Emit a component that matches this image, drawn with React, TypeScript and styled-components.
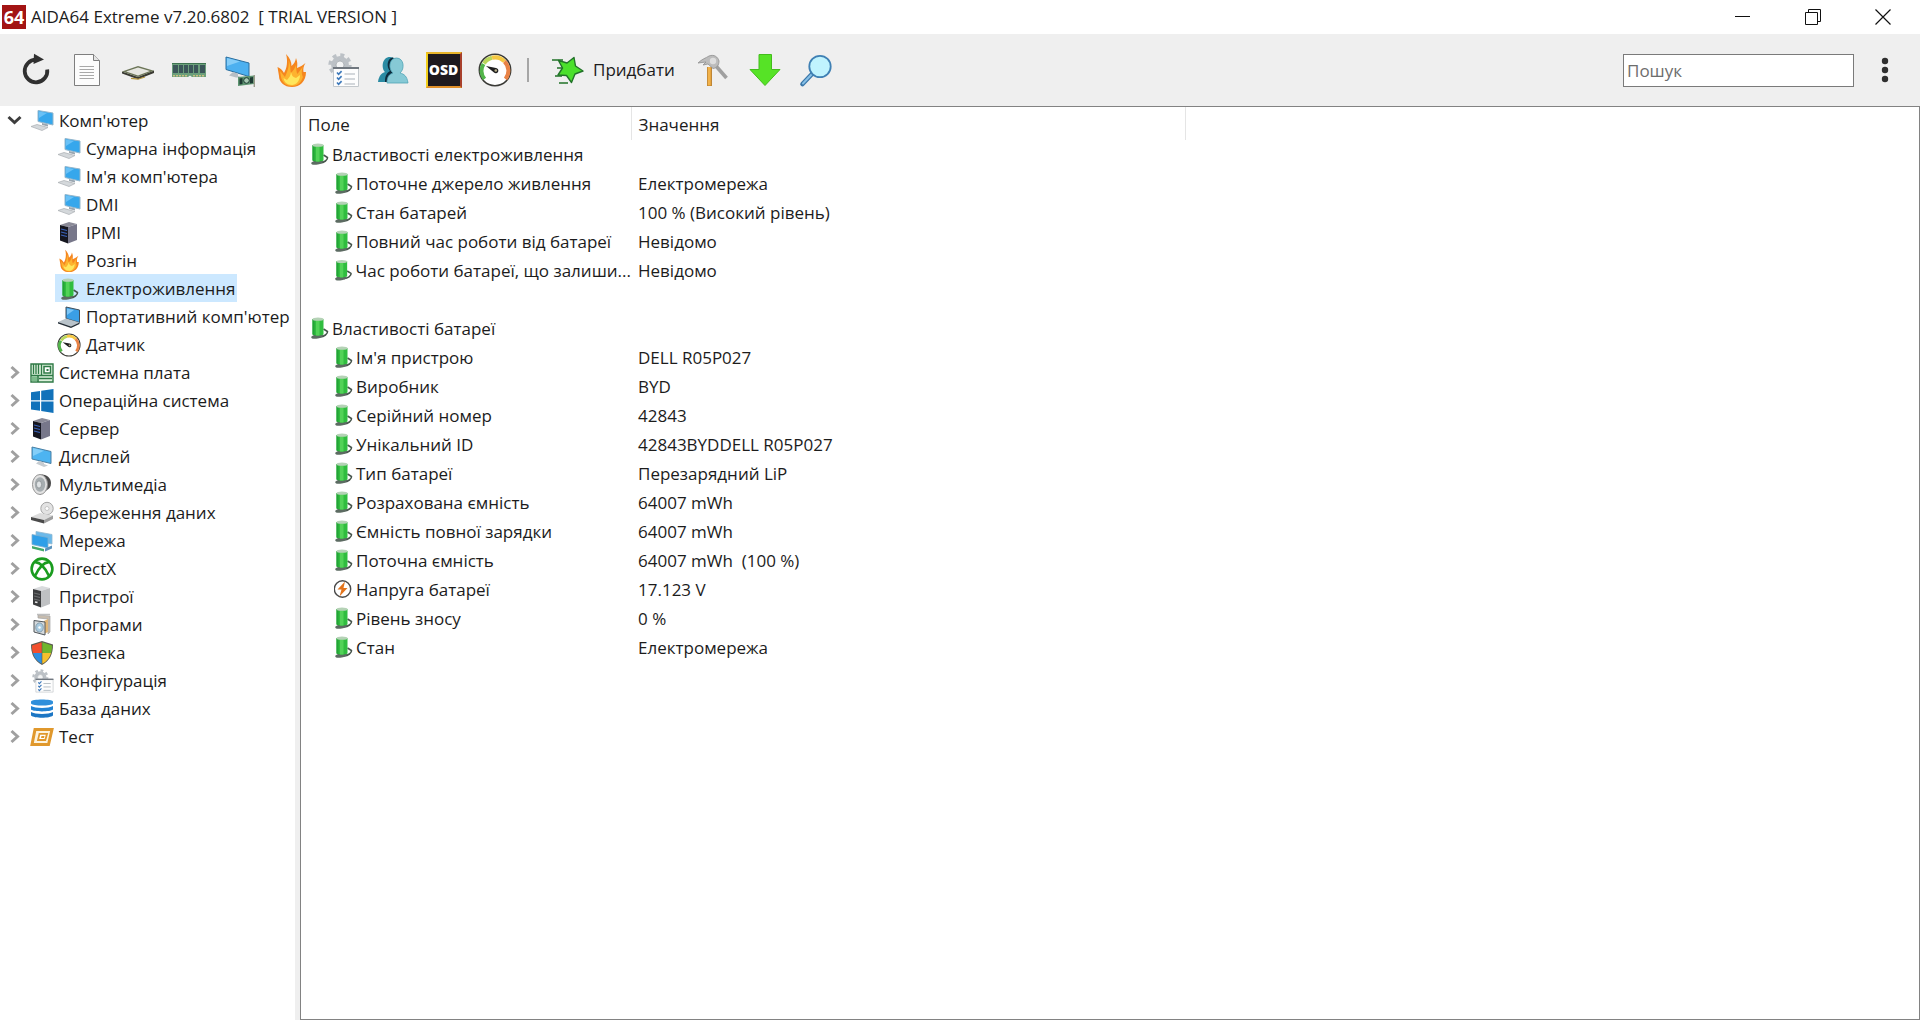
import React, { useState } from "react";
import styled, { createGlobalStyle } from "styled-components";

const GlobalStyle = createGlobalStyle`
  *, *::before, *::after { box-sizing: border-box; }
  body { margin: 0; background: #fff; }
  body, button, input, table {
    font-family: "Open Sans", "Noto Sans", sans-serif;
    font-size: 17px;
    line-height: 24px;
    color: #1c1c1c;
  }
  button { border: 0; padding: 0; background: none; cursor: default; }
`;

const Window = styled.div`
  display: flex;
  flex-direction: column;
  min-height: 100vh;
`;

const TitleBar = styled.header`
  display: flex;
  align-items: center;
  height: 34px;
  padding: 0 2px;
  gap: 5px;
`;

const Title = styled.h1`
  flex: 1;
  margin: 0;
  font-size: 17px;
  font-weight: 400;
  line-height: 24px;
  white-space: pre;
`;

const CaptionButton = styled.button`
  display: grid;
  place-items: center;
  width: 70px;
  height: 34px;
  &:hover { background: #e5e5e5; }
`;

const CaptionGroup = styled.div`
  display: flex;
`;

const Toolbar = styled.div`
  display: flex;
  align-items: center;
  height: 72px;
  padding: 0 10px;
  background: #efefef;
`;

const ToolButton = styled.button<{ $wide?: boolean }>`
  display: flex;
  align-items: center;
  justify-content: ${(p) => (p.$wide ? "flex-start" : "center")};
  gap: 9px;
  width: ${(p) => (p.$wide ? "auto" : "51px")};
  height: 48px;
  padding: ${(p) => (p.$wide ? "0 14px" : "0")};
  &:hover { background: #e2e6ea; }
`;

const Divider = styled.span`
  width: 2px;
  height: 24px;
  margin: 0 7px;
  background: #a6a6a6;
`;

const Spacer = styled.div`
  flex: 1;
`;

const SearchBox = styled.input`
  width: 231px;
  height: 33px;
  margin-right: 5px;
  padding: 0 3px;
  border: 1px solid #7a7a7a;
  border-radius: 0;
  background: #fff;
  outline: none;
  &::placeholder { color: #6d6d6d; opacity: 1; }
`;

const Workspace = styled.div`
  display: flex;
  flex: 1;
`;

const Sidebar = styled.nav`
  width: 295px;
  flex: none;
`;

const Splitter = styled.div`
  width: 5px;
  flex: none;
  background: #efefef;
`;

const Tree = styled.ul`
  list-style: none;
  margin: 0;
  padding: 0;
`;

const TreeRow = styled.div<{ $level: number }>`
  display: flex;
  align-items: center;
  height: 28px;
  padding-left: ${(p) => (p.$level ? "55px" : "0")};
`;

const Expander = styled.button`
  display: grid;
  place-items: center;
  width: 28px;
  height: 28px;
`;

const TreeLabel = styled.button<{ $selected: boolean }>`
  display: flex;
  align-items: center;
  gap: 5px;
  height: 28px;
  padding: 2px 2px 0;
  white-space: nowrap;
  background: ${(p) => (p.$selected ? "#cce8ff" : "transparent")};
`;

const Details = styled.main`
  flex: 1;
  min-width: 0;
  border: 1px solid #828282;
`;

const Table = styled.table`
  width: 100%;
  table-layout: fixed;
  border-collapse: collapse;
`;

const FieldCol = styled.col`
  width: 330px;
`;

const ValueCol = styled.col`
  width: 554px;
`;

const HeadCell = styled.th`
  height: 33px;
  padding: 2px 7px 0;
  font-weight: 400;
  text-align: left;
  border-right: 1px solid #e5e5e5;
  &:last-child { border-right: 0; }
`;

const Cell = styled.td`
  height: 29px;
  padding: 0 7px;
  white-space: pre;
`;

const FieldCell = styled.td<{ $level: number }>`
  height: 29px;
  padding: 0 0 0 ${(p) => (p.$level ? "33px" : "9px")};
`;

const FieldLine = styled.span`
  display: flex;
  align-items: center;
  gap: 3px;
  white-space: nowrap;
`;

/* ---------- caption and toolbar drawings ---------- */

const LogoBox = styled.span`
  display: grid;
  place-items: center;
  width: 24px;
  height: 24px;
  background: #a31414;
  color: #fff;
  font-size: 18px;
  font-weight: 700;
  line-height: 24px;
`;

const Big = ({ children }: { children: React.ReactNode }) => (
  <svg width="34" height="34" viewBox="0 0 34 34" aria-hidden="true" overflow="visible">{children}</svg>
);

const Small = ({ children }: { children: React.ReactNode }) => (
  <svg width="24" height="24" viewBox="0 0 24 24" aria-hidden="true">{children}</svg>
);

const RefreshIcon = () => (
  <Big>
    <path d="M28.2 16.5A11.3 11.3 0 1 1 17 6.7" fill="none" stroke="#303030" strokeWidth="3.8" />
    <path d="M15 .8L25 6.6L14.5 11z" fill="#303030" />
  </Big>
);

const ReportIcon = () => (
  <Big>
    <path d="M4.5 1.5H23.5L29.5 7.5V32.5H4.5z" fill="#fcfcfc" stroke="#7e7e7e" />
    <path d="M23.5 1.5V7.5H29.5" fill="#e4e4e4" stroke="#7e7e7e" />
    <path d="M9.5 13.5H24M9.5 16.5H24M9.5 19.5H24M9.5 22.5H24M9.5 25.5H24" stroke="#a8a8a8" />
  </Big>
);

const ChipIcon = () => (
  <Big>
    <path d="M1 18.5L17 24L33 17.5V20L17 26.2L1 20.5z" fill="#3a3a33" />
    <path d="M1 18.5L17 13L33 17.8L17 24z" fill="#6c7558" />
    <path d="M5 18.5L17 14.4L29 18L17 22.6z" fill="#e6e6e0" />
    <path d="M10 25.3L17 26.2L24 24" fill="none" stroke="#b4953c" strokeWidth="1.2" />
  </Big>
);

const MemoryIcon = () => (
  <Big>
    <path d="M0 10H34V24H20L18 22.5L16 24H0z" fill="#6b9f7b" />
    <path d="M1 12h5v8h-5zM7 12h4v8H7zM12 12h4v8h-4zM17 12h4v8h-4zM22 12h4v8h-4zM28 12h5v8h-5z" fill="#3b5659" />
    <path d="M1 22.7H15M21 22.7H33" stroke="#c9bf80" strokeWidth="1.4" strokeDasharray="2 1" />
    <path d="M0 10.5H34" stroke="#3d7350" />
  </Big>
);

const DisplayCardIcon = () => (
  <Big>
    <path d="M3 4L26 10V23.5L3 16.5z" fill="#4cb0f0" stroke="#2b6f9f" />
    <path d="M4 5L17 8.4L4 13z" fill="#85cdf8" />
    <path d="M10 19L15 20.500V23L19 24.500H13L6 22.500z" fill="#b7bec4" />
    <path d="M15 24L31 22.500V31L15 33z" fill="#5d9470" />
    <path d="M16.500 25.500l3-.5v6l-3 .5zM27 24.500l3-.5v6l-3 .5z" fill="#1d3a33" />
    <circle cx="23.500" cy="27.500" r="2.800" fill="#a8cbb4" stroke="#1d3a33" />
    <path d="M31.300 22V34" stroke="#9a9a8a" strokeWidth="1.400" />
  </Big>
);

const FlameShapes = () => (
  <>
    <path
      d="M12 1C16 5 17.500 9 17.500 13C20 11 21.500 8 22 5C23.500 9 23.500 11 23 15C26 14 29 12 31.500 10C29.500 13 29 16 29.500 19L32 19C32 28 26 34 18 34C10 34 5 29 5 23L3.500 14C6 15 8.500 17 10 20C13 15 14 8 12 1z"
      fill="#f5861f"
    />
    <path
      d="M14.500 7C17 12 16 17 17 20C19 18 21 15 22 12C22.500 16 22 19 23.500 21C25 19 27 16 29 13.500C27 18 28 22 29 24C27 30 23 33 18 33C12 33 8 29 7 24L6 18C8 20 9 22 11 24C13 19 15.500 14 14.500 7z"
      fill="#fdb32f"
    />
    <path d="M17 19C18 23 19 24 22 25L26 22C26 28 22 32 18 32C13 32 10 29 9.500 25L13 27C15 25 17 22 17 19z" fill="#ffe65c" />
  </>
);

const FlameIcon = () => <Big><FlameShapes /></Big>;

const GearShape = () => (
  <>
    <circle cx="15" cy="12" r="6.4" fill="none" stroke="#bcc1c6" strokeWidth="5" />
    <circle cx="15" cy="12" r="10" fill="none" stroke="#bcc1c6" strokeWidth="3.4" strokeDasharray="4 3.85" />
    <circle cx="15" cy="12" r="4" fill="#f3f4f5" stroke="#9ca2a8" strokeWidth=".7" />
  </>
);

const ConfigShapes = () => (
  <>
    <GearShape />
    <path d="M8.5 14.5H33.5V33.5H8.5z" fill="#fdfdfd" stroke="#c3c8cc" />
    <path d="M8 15H34" stroke="#70777f" strokeWidth="2" />
    <path d="M12 19.5l1.6 1.8 3-3.2M12 24.5l1.6 1.8 3-3.2M12 29.5l1.6 1.8 3-3.2" fill="none" stroke="#3c78ba" strokeWidth="1.6" />
    <path d="M19.5 21H30M19.5 26H30M19.5 31H30" stroke="#a9b2ba" strokeWidth="1.2" />
  </>
);

const ConfigIcon = () => <Big><ConfigShapes /></Big>;

const UsersIcon = () => (
  <Big>
    <path d="M2 29C3 22 6 20 9 19C5 15 6 4 14 4C18 4 20 7 20 10L16 29z" fill="#2b8ba3" />
    <path d="M9 29C9 22 11 20 14 18C10 14 11 5 17 4.5L20 8V29z" fill="#0d2b3c" />
    <path d="M11 30C11 23 14 21 17 20C12 16 13 5 20.500 5C28 5 29 16 24 20C28 21 31 23 32 30z" fill="#86c9d5" stroke="#4fa3b5" strokeWidth=".8" />
  </Big>
);

const OsdBox = styled.span`
  display: grid;
  place-items: center;
  width: 36px;
  height: 36px;
  border: 2px solid;
  border-color: #e8b52a #a8402c #e0902a #f2cf1c;
  background: #1e1a1e;
  color: #fff;
  font-size: 14px;
  font-weight: 800;
  line-height: 16px;
`;

const GaugeShapes = () => (
  <>
    <circle cx="17" cy="17" r="15.700" fill="#fff" stroke="#3a3a36" strokeWidth="1.500" />
    <path d="M6.500 26A13 13 0 0 1 5.500 11" fill="none" stroke="#52b54a" strokeWidth="4" />
    <path d="M6 10.500A13 13 0 0 1 14 4.800" fill="none" stroke="#b9d65a" strokeWidth="4" />
    <path d="M14 4.800A13 13 0 0 1 26.500 8.500" fill="none" stroke="#f5c842" strokeWidth="4" />
    <path d="M26.500 8.500A13 13 0 0 1 27.500 26" fill="none" stroke="#e98346" strokeWidth="4" />
    <path d="M8 13L18 15A2.600 2.600 0 1 1 16 19.500z" fill="#1f1f1f" />
    <circle cx="17.800" cy="17.500" r="1.300" fill="#b9b08a" />
  </>
);

const GaugeIcon = () => <Big><GaugeShapes /></Big>;

const BuyIcon = () => (
  <Big>
    <path d="M2 7H13M7 15H14M5 23H12M9 30H18" stroke="#227329" strokeWidth="1.500" />
    <path d="M24 4.500L25.500 13L33 18L25 21L21.500 29.500L16.500 22.500L8 22L12.500 15L8.500 7.500L17 10z" fill="#4be02c" stroke="#227329" strokeWidth="1.400" strokeLinejoin="round" />
  </Big>
);

const HatchetIcon = () => (
  <Big>
    <path d="M19 13L29.500 25" stroke="#9f9f9f" strokeWidth="3.600" />
    <path d="M12.500 14V33" stroke="#b87a22" strokeWidth="4.800" />
    <path d="M12.300 14V32.500" stroke="#f2b24a" strokeWidth="3" />
    <path d="M1 10C5 6 9 5 12 3C17 1 21 4 22 8C22 12 20 15 16 15.500L11 11L6 12L9 9z" fill="#bcbcbc" stroke="#8f8f8f" strokeWidth=".8" />
    <circle cx="16" cy="8" r="3.200" fill="#dedede" />
  </Big>
);

const DownloadIcon = () => (
  <Big>
    <path d="M11 1.500H23.500V16.500H32L17 32.500L2 16.500H11z" fill="#56e326" stroke="#43bd1c" />
  </Big>
);

const MagnifierIcon = () => (
  <Big>
    <path d="M13 21L3.500 31" stroke="#3a76a8" strokeWidth="4.600" strokeLinecap="round" />
    <path d="M12.500 21.500L4 30.500" stroke="#86bfe6" strokeWidth="2" strokeLinecap="round" />
    <circle cx="21" cy="13.500" r="10.700" fill="#c0f3fe" stroke="#3f80b4" strokeWidth="1.800" />
  </Big>
);

/* ---------- tree drawings ---------- */

const ComputerIcon = () => (
  <Small>
    <path d="M8 1.500L23 4V16L8 12.500z" fill="#36a7ec" stroke="#93b6cc" />
    <path d="M9 2.500L17 4L9 9z" fill="#69c1f6" />
    <path d="M12 14L18 15.500V17.500L12 16z" fill="#9aa6b0" />
    <path d="M1 17.500L7 15.500L18 18.500L12 21.500z" fill="#d4d8db" stroke="#a9aeb2" strokeWidth=".7" />
  </Small>
);

const TowerIcon = ({ light }: { light?: boolean }) => (
  <Small>
    <path d="M3 4L12 1L20 3L11 6z" fill={light ? "#d9dbdd" : "#8a8a97"} />
    <path d="M11 6L20 3V19L11 22.500z" fill={light ? "#bfc1c3" : "#77778a"} />
    <path d="M3 4L11 6V22.500L3 19.500z" fill={light ? "#3c3d3f" : "#15161f"} />
    <path d="M4 8L10 9.500M4 11L10 12.500M4 14L10 15.500" stroke={light ? "#6c6e70" : "#3a62b8"} strokeWidth="1.200" />
    {light && <path d="M5 17L7.500 17.600" stroke="#e8e8e8" strokeWidth="1.500" />}
  </Small>
);

const SmallFlameIcon = () => (
  <Small><g transform="scale(.68)"><FlameShapes /></g></Small>
);

const BatteryShapes = () => (
  <>
    <path d="M9 20C13 19.500 17 17 16.500 14.500L12.500 12" fill="none" stroke="#46544b" strokeWidth="1.600" />
    <path d="M0 20C2 17 8 17 12.500 18C12 21 5 22.500 1 21.500z" fill="#5c6b62" />
    <path d="M1.500 2V17.500C4 19 10 19 12.500 17.500V2z" fill="#30bd3f" />
    <path d="M1.500 2V17.500L3.500 18.300V2z" fill="#23a337" />
    <path d="M5 2.500H8.500V18.500H5z" fill="#52d257" />
    <ellipse cx="7" cy="2.200" rx="5.500" ry="1.600" fill="#b5d2b6" />
  </>
);

const SmallBatteryIcon = () => (
  <Small><g transform="translate(4 1)"><BatteryShapes /></g></Small>
);

const LaptopIcon = () => (
  <Small>
    <path d="M9 2L22.500 5V17.500L9 13.500z" fill="#3a9fe6" stroke="#42505c" />
    <path d="M10 3.500L17 5L10 10z" fill="#7cc6f6" />
    <path d="M1 17L9 13.500L22.500 17.500L14 21.500z" fill="#b9c3ca" />
    <path d="M1 17L14 21.500L22.500 17.500V19L14 23L1 18.500z" fill="#27313a" />
  </Small>
);

const SmallGaugeIcon = () => (
  <Small><g transform="scale(.705)"><GaugeShapes /></g></Small>
);

const BoardIcon = () => (
  <Small>
    <path d="M1 3H23V21H1z" fill="#dcf0dc" stroke="#2f7a46" strokeWidth="1.400" />
    <path d="M3.500 3V13M6 3V13M8.500 3V13M11.500 3V14" stroke="#2f7a46" strokeWidth="1.300" />
    <path d="M14 5.500H20.500V12H14z" fill="#fff" stroke="#2f7a46" strokeWidth="1.500" />
    <path d="M16.500 8h2v2h-2z" fill="#2f7a46" />
    <path d="M1 14.500H23M8 14V21M9 17.500H22" stroke="#2f7a46" strokeWidth="1.600" />
    <path d="M1.800 15.500H7V20.200H1.800z" fill="#7dbb8b" />
  </Small>
);

const WindowsIcon = () => (
  <Small>
    <path d="M1 3.300L10 2V11.300H1zM11.200 1.800L23.500 0V11.300H11.200zM1 12.500H10V21.800L1 20.500zM11.200 12.500H23.500V24L11.200 22z" fill="#1272ba" />
  </Small>
);

const DisplayIcon = () => (
  <Small>
    <path d="M2 2L21 6.500V18.500L2 14z" fill="#4db4f1" stroke="#4a7fa3" />
    <path d="M3 3L14 5.700L3 11z" fill="#83cef8" />
    <path d="M9 16L14 17.500V19L18 20.500L14 22L6 18.500z" fill="#c6ccd1" />
  </Small>
);

const SpeakerIcon = () => (
  <Small>
    <path d="M9 2C15 0 21 4 21 10C21 14 19 16 17 17L10 22z" fill="#4b4b4b" />
    <ellipse cx="10" cy="11.500" rx="7.500" ry="10" fill="#e2e2e2" stroke="#939393" />
    <ellipse cx="10" cy="11.500" rx="5.200" ry="7.300" fill="#a6adb0" />
    <ellipse cx="9" cy="11.500" rx="2.600" ry="3.600" fill="#dfe3e5" stroke="#858b8e" strokeWidth=".7" />
  </Small>
);

const DiskIcon = () => (
  <Small>
    <circle cx="17" cy="7.500" r="6.200" fill="#e3e3e3" stroke="#a5a5a5" />
    <circle cx="17" cy="7.500" r="2" fill="#fff" stroke="#b5b5b5" strokeWidth=".7" />
    <path d="M1 16L10 12L23 14.500L14 19z" fill="#dcdcdc" />
    <path d="M1 16L14 19V22.500L1 19z" fill="#4a4a4a" />
    <path d="M14 19L23 14.500V18L14 22.500z" fill="#9e9e9e" />
  </Small>
);

const NetworkIcon = () => (
  <Small>
    <path d="M6 2.500L22 5.500V15L6 12z" fill="#6bb9ea" stroke="#8fb7d0" strokeWidth=".8" />
    <path d="M2 5.500L18 8.500V19L2 15.500z" fill="#2f9fe8" stroke="#7fb0cf" strokeWidth=".8" />
    <path d="M2 17L14 20V22.500L2 19.500z" fill="#43a96b" />
    <path d="M15 19.500L22 16.500V19.500L15 22.500z" fill="#5b93bd" />
  </Small>
);

const XboxIcon = () => (
  <Small>
    <circle cx="12" cy="12" r="10.400" fill="#fff" stroke="#1a9c1f" strokeWidth="2.600" />
    <path d="M5 5.500C9 4.500 15 10 19 19M19 5.500C15 4.500 9 10 5 19" fill="none" stroke="#1a9c1f" strokeWidth="2.600" />
  </Small>
);

const ProgramsIcon = () => (
  <Small>
    <path d="M8 2L20 3V19L18 21V6L8 5z" fill="#c7bcae" stroke="#a4a4a4" strokeWidth=".7" />
    <path d="M7 1.500H20" stroke="#bdbdbd" strokeWidth="1.500" />
    <path d="M14 8L18 6V19L14 21z" fill="#e2b676" />
    <path d="M4 7.500L15 9V22L4 19z" fill="#d5dadd" stroke="#50565b" />
    <ellipse cx="9.500" cy="14.500" rx="3.800" ry="4.600" fill="#a9cbe0" stroke="#738a99" strokeWidth=".7" />
    <circle cx="9.500" cy="14.500" r="1.200" fill="#fff" />
  </Small>
);

const ShieldIcon = () => (
  <Small>
    <path d="M12 0L1 3.500C1 13 4 19.500 12 24C20 19.500 23 13 23 3.500z" fill="#5b5b52" />
    <path d="M11.700 1.200L2 4.400C2 8 2.300 10 3 12H11.700z" fill="#f2502d" />
    <path d="M12.300 1.200L22 4.400C22 8 21.700 10 21 12H12.300z" fill="#6fb52c" />
    <path d="M11.700 12H3C4.500 17 7 20 11.700 22.800z" fill="#2f8fdf" />
    <path d="M12.300 12H21C19.500 17 17 20 12.300 22.800z" fill="#f6c02c" />
  </Small>
);

const SmallConfigIcon = () => (
  <Small><g transform="scale(.69)"><ConfigShapes /></g></Small>
);

const DatabaseIcon = () => (
  <Small>
    <path d="M1 4.500C1 1.800 23 1.800 23 4.500V6.500C21 9.300 3 9.300 1 6.500z" fill="#2f8fdb" />
    <path d="M1 9C5 11.500 19 11.500 23 9V12.500C20 15 4 15 1 12.500z" fill="#2383d3" />
    <path d="M1 15C5 17.500 19 17.500 23 15V18.500C20 21.500 4 21.500 1 18.500z" fill="#1c76c4" />
  </Small>
);

const TestIcon = () => (
  <Small>
    <path d="M5 4.500H22L18.500 19.500H2z" fill="#fdf3dd" stroke="#e0982c" strokeWidth="3" />
    <path d="M9.500 8.800H17L15.300 15H8z" fill="#fff" stroke="#e0982c" strokeWidth="1.800" />
    <path d="M11.500 11H14.500L14 13H11z" fill="#e0982c" />
  </Small>
);

const BatteryIcon = () => (
  <svg width="19" height="24" viewBox="-1 0 19 24" aria-hidden="true"><BatteryShapes /></svg>
);

const VoltageIcon = () => (
  <svg width="19" height="24" viewBox="0 0 19 24" aria-hidden="true">
    <circle cx="8.500" cy="11" r="8.200" fill="#fff" stroke="#4a4a4a" strokeWidth="1.400" />
    <path d="M11 3.500L3.500 11.500H7.500L5.500 18.500L13.500 10H9.500z" fill="#e3741c" />
  </svg>
);

const Chevron = ({ open }: { open: boolean }) => (
  <svg width="16" height="16" viewBox="0 0 16 16" aria-hidden="true">
    {open
      ? <path d="M2.500 5L8.500 10.500L14.500 5" fill="none" stroke="#3d3d3d" strokeWidth="3" />
      : <path d="M5.500 3L11.500 8.500L5.500 14" fill="none" stroke="#a0a0a0" strokeWidth="3" />}
  </svg>
);

/* ---------- content ---------- */

type Node = { label: string; icon: React.ReactNode; children?: Node[] };

const nodes: Node[] = [
  {
    label: "Комп'ютер",
    icon: <ComputerIcon />,
    children: [
      { label: "Сумарна інформація", icon: <ComputerIcon /> },
      { label: "Ім'я комп'ютера", icon: <ComputerIcon /> },
      { label: "DMI", icon: <ComputerIcon /> },
      { label: "IPMI", icon: <TowerIcon /> },
      { label: "Розгін", icon: <SmallFlameIcon /> },
      { label: "Електроживлення", icon: <SmallBatteryIcon /> },
      { label: "Портативний комп'ютер", icon: <LaptopIcon /> },
      { label: "Датчик", icon: <SmallGaugeIcon /> },
    ],
  },
  { label: "Системна плата", icon: <BoardIcon /> },
  { label: "Операційна система", icon: <WindowsIcon /> },
  { label: "Сервер", icon: <TowerIcon /> },
  { label: "Дисплей", icon: <DisplayIcon /> },
  { label: "Мультимедіа", icon: <SpeakerIcon /> },
  { label: "Збереження даних", icon: <DiskIcon /> },
  { label: "Мережа", icon: <NetworkIcon /> },
  { label: "DirectX", icon: <XboxIcon /> },
  { label: "Пристрої", icon: <TowerIcon light /> },
  { label: "Програми", icon: <ProgramsIcon /> },
  { label: "Безпека", icon: <ShieldIcon /> },
  { label: "Конфігурація", icon: <SmallConfigIcon /> },
  { label: "База даних", icon: <DatabaseIcon /> },
  { label: "Тест", icon: <TestIcon /> },
];

type Entry = { field: string; value?: string; voltage?: boolean };

const groups: { title: string; entries: Entry[] }[] = [
  {
    title: "Властивості електроживлення",
    entries: [
      { field: "Поточне джерело живлення", value: "Електромережа" },
      { field: "Стан батарей", value: "100 % (Високий рівень)" },
      { field: "Повний час роботи від батареї", value: "Невідомо" },
      { field: "Час роботи батареї, що залиши...", value: "Невідомо" },
    ],
  },
  {
    title: "Властивості батареї",
    entries: [
      { field: "Ім'я пристрою", value: "DELL R05P027" },
      { field: "Виробник", value: "BYD" },
      { field: "Серійний номер", value: "42843" },
      { field: "Унікальний ID", value: "42843BYDDELL R05P027" },
      { field: "Тип батареї", value: "Перезарядний LiP" },
      { field: "Розрахована ємність", value: "64007 mWh" },
      { field: "Ємність повної зарядки", value: "64007 mWh" },
      { field: "Поточна ємність", value: "64007 mWh  (100 %)" },
      { field: "Напруга батареї", value: "17.123 V", voltage: true },
      { field: "Рівень зносу", value: "0 %" },
      { field: "Стан", value: "Електромережа" },
    ],
  },
];

const tools: { name: string; icon: React.ReactNode }[] = [
  { name: "Оновити", icon: <RefreshIcon /> },
  { name: "Звіт", icon: <ReportIcon /> },
  { name: "Процесор", icon: <ChipIcon /> },
  { name: "Пам'ять", icon: <MemoryIcon /> },
  { name: "Відео", icon: <DisplayCardIcon /> },
  { name: "Тест стабільності", icon: <FlameIcon /> },
  { name: "Налаштування", icon: <ConfigIcon /> },
  { name: "Користувачі", icon: <UsersIcon /> },
  { name: "OSD", icon: <OsdBox>OSD</OsdBox> },
  { name: "Датчики", icon: <GaugeIcon /> },
];

const extraTools: { name: string; icon: React.ReactNode }[] = [
  { name: "Ключ", icon: <HatchetIcon /> },
  { name: "Завантажити", icon: <DownloadIcon /> },
  { name: "Знайти", icon: <MagnifierIcon /> },
];

export default function App() {
  const [selected, setSelected] = useState("Електроживлення");
  const [open, setOpen] = useState<Record<string, boolean>>({ "Комп'ютер": true });

  return (
    <Window>
      <GlobalStyle />
      <TitleBar>
        <LogoBox>64</LogoBox>
        <Title>{"AIDA64 Extreme v7.20.6802  [ TRIAL VERSION ]"}</Title>
        <CaptionGroup>
          <CaptionButton aria-label="Згорнути">
            <svg width="16" height="16" viewBox="0 0 16 16"><path d="M0 7.500H15" stroke="#111" /></svg>
          </CaptionButton>
          <CaptionButton aria-label="Відновити">
            <svg width="16" height="16" viewBox="0 0 16 16" fill="none" stroke="#111">
              <path d="M.5 3.500H12.500V15.500H.5zM3.500 3.500V.5H15.500V12.500H12.500" />
            </svg>
          </CaptionButton>
          <CaptionButton aria-label="Закрити">
            <svg width="16" height="16" viewBox="0 0 16 16"><path d="M.5 .5L15.500 15.500M15.500 .5L.5 15.500" stroke="#111" strokeWidth="1.200" /></svg>
          </CaptionButton>
        </CaptionGroup>
      </TitleBar>

      <Toolbar role="toolbar">
        {tools.map((t) => (
          <ToolButton key={t.name} aria-label={t.name}>{t.icon}</ToolButton>
        ))}
        <Divider />
        <ToolButton $wide><BuyIcon />Придбати</ToolButton>
        {extraTools.map((t) => (
          <ToolButton key={t.name} aria-label={t.name}>{t.icon}</ToolButton>
        ))}
        <Spacer />
        <SearchBox type="text" aria-label="Пошук" placeholder="Пошук" />
        <ToolButton aria-label="Меню">
          <svg width="8" height="26" viewBox="0 0 8 26" fill="#2f2f2f">
            <circle cx="4" cy="4" r="3.200" /><circle cx="4" cy="13" r="3.200" /><circle cx="4" cy="22" r="3.200" />
          </svg>
        </ToolButton>
      </Toolbar>

      <Workspace>
        <Sidebar>
          <Tree>
            {nodes.map((n) => (
              <li key={n.label}>
                <TreeRow $level={0}>
                  <Expander
                    aria-label={n.label}
                    aria-expanded={!!open[n.label]}
                    onClick={() => setOpen({ ...open, [n.label]: !open[n.label] })}
                  >
                    <Chevron open={!!open[n.label]} />
                  </Expander>
                  <TreeLabel $selected={selected === n.label} onClick={() => setSelected(n.label)}>
                    {n.icon}{n.label}
                  </TreeLabel>
                </TreeRow>
                {n.children && open[n.label] && (
                  <Tree>
                    {n.children.map((c) => (
                      <li key={c.label}>
                        <TreeRow $level={1}>
                          <TreeLabel $selected={selected === c.label} onClick={() => setSelected(c.label)}>
                            {c.icon}{c.label}
                          </TreeLabel>
                        </TreeRow>
                      </li>
                    ))}
                  </Tree>
                )}
              </li>
            ))}
          </Tree>
        </Sidebar>
        <Splitter />
        <Details>
          <Table>
            <colgroup><FieldCol /><ValueCol /><col /></colgroup>
            <thead>
              <tr>
                <HeadCell scope="col">Поле</HeadCell>
                <HeadCell scope="col">Значення</HeadCell>
                <HeadCell as="td" />
              </tr>
            </thead>
            {groups.map((g, i) => (
              <tbody key={g.title}>
                {i > 0 && <tr><Cell colSpan={3} /></tr>}
                <tr>
                  <FieldCell $level={0} colSpan={3}>
                    <FieldLine><BatteryIcon />{g.title}</FieldLine>
                  </FieldCell>
                </tr>
                {g.entries.map((e) => (
                  <tr key={e.field}>
                    <FieldCell $level={1}>
                      <FieldLine>{e.voltage ? <VoltageIcon /> : <BatteryIcon />}{e.field}</FieldLine>
                    </FieldCell>
                    <Cell colSpan={2}>{e.value}</Cell>
                  </tr>
                ))}
              </tbody>
            ))}
          </Table>
        </Details>
      </Workspace>
    </Window>
  );
}
